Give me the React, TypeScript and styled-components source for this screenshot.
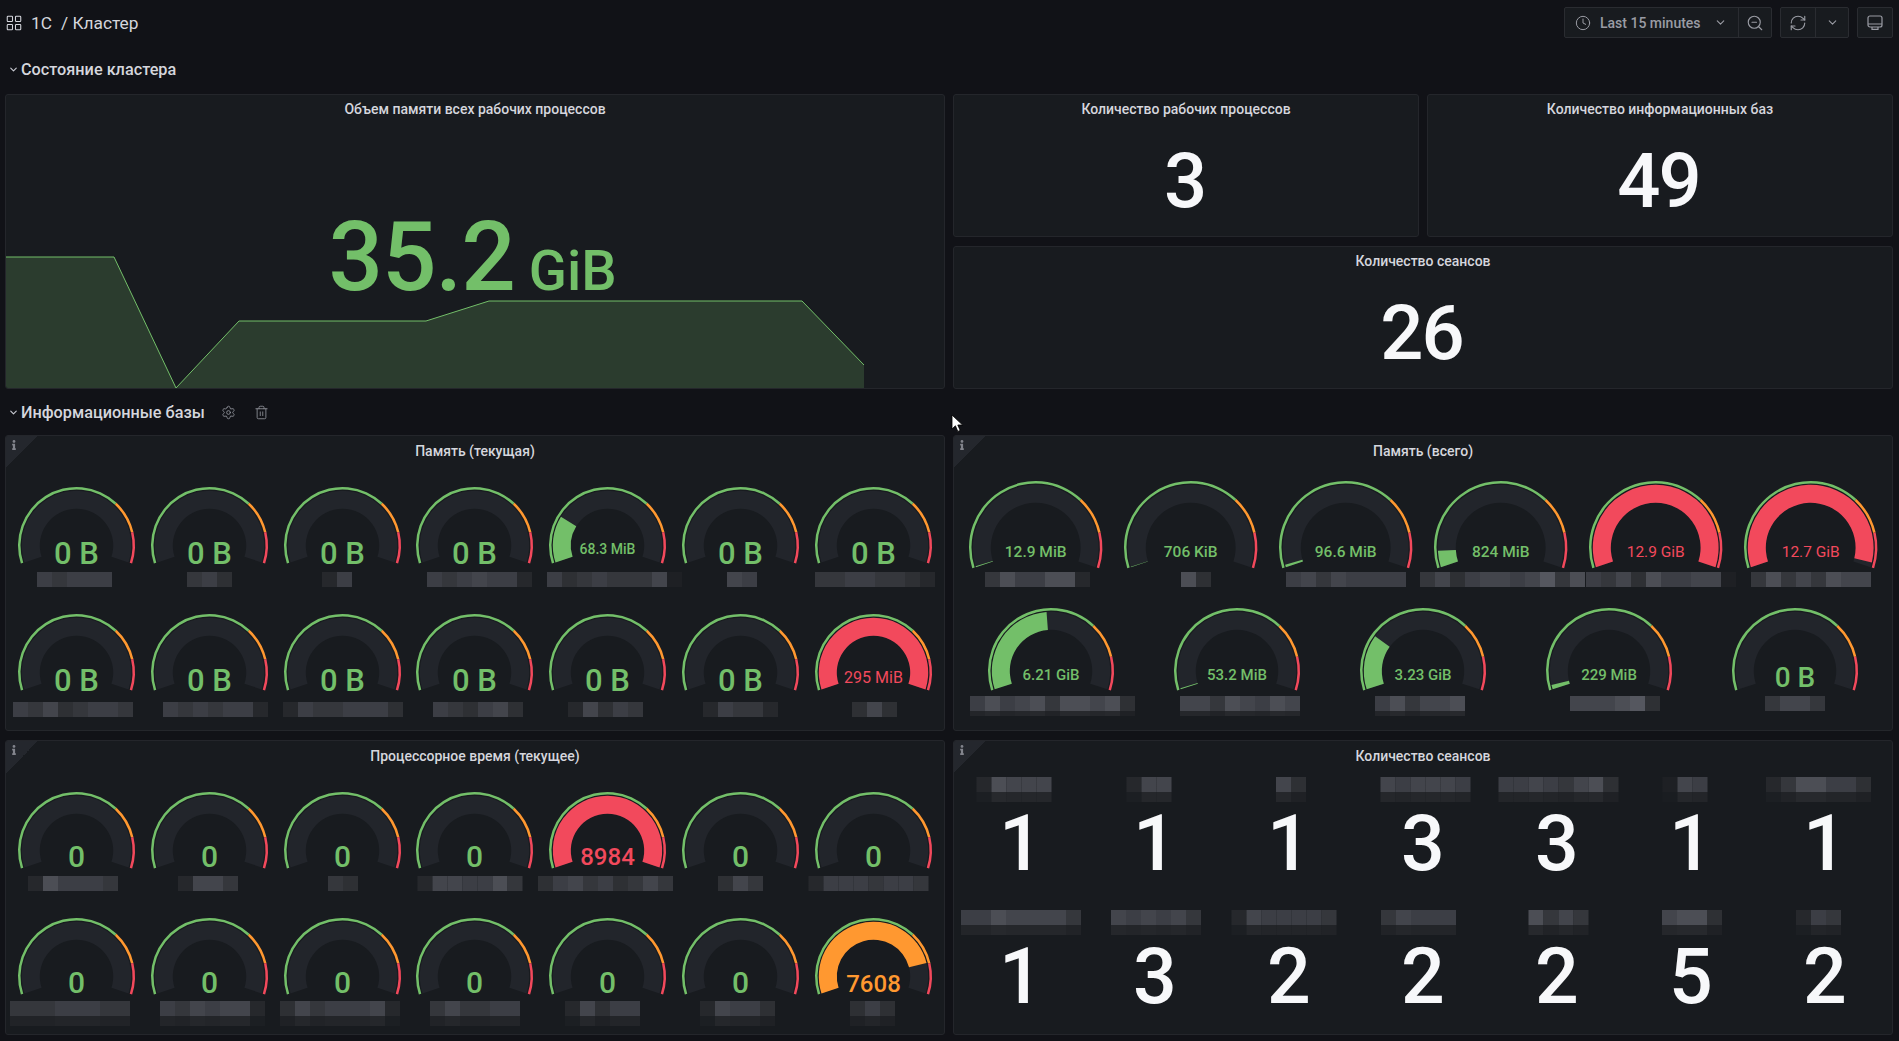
import styled, { createGlobalStyle } from 'styled-components'
import { ChevronDown, Clock, LayoutGrid, RefreshCw, Settings, Trash2, ZoomOut } from 'lucide-react'
import { FaInfo } from 'react-icons/fa'

const GREEN = '#73BF69'
const ORANGE = '#FF9830'
const RED = '#F2495C'

const SHADES = ['#1e2024', '#26282c', '#2e3034', '#35373c', '#3c3e45', '#43454c', '#4c4e55', '#55575f']
const TAILS = ['#1a1d21', '#1c1f23', '#1f2125', '#212327', '#232529', '#25272b', '#27292d', '#292b2f']

type Reading = {
  text: string
  fill: number
  size: number
  base: number
  shift: number
  tiles: string
  color?: string
  thin?: boolean
}

const zeroB = (shift: number, tiles: string): Reading => ({ text: '0 B', fill: 0, size: 31, base: 18, shift, tiles })
const zero = (shift: number, tiles: string): Reading => ({ text: '0', fill: 0, size: 30, base: 16.5, shift, tiles })

const memoryNow: Reading[][] = [
  [
    zeroB(-2, '43444'),
    zeroB(0, '342'),
    zeroB(-5, '14'),
    zeroB(5, '4345441'),
    { text: '68.3 MiB', fill: 0.23, size: 14, base: 8.5, shift: 7, tiles: '423433350' },
    zeroB(1, '54'),
    zeroB(1, '33443321'),
  ],
  [
    zeroB(-3, '43523443'),
    zeroB(6, '4343441'),
    zeroB(1, '14334442'),
    zeroB(3, '432452'),
    zeroB(-2, '15243'),
    zeroB(0, '14331'),
    { text: '295 MiB', fill: 1, size: 16, base: 10, shift: 1, tiles: '252', color: RED, thin: true },
  ],
]

const memoryTotal: Reading[][] = [
  [
    { text: '12.9 MiB', fill: 0.004, size: 15.5, base: 9, shift: 2, tiles: '3644661' },
    { text: '706 KiB', fill: 0.002, size: 15.5, base: 9, shift: 5, tiles: '62' },
    { text: '96.6 MiB', fill: 0.011, size: 15.5, base: 9, shift: 0, tiles: '45354444' },
    { text: '824 MiB', fill: 0.07, size: 15.5, base: 9, shift: 2, tiles: '35245545736' },
    { text: '12.9 GiB', fill: 1, size: 15.5, base: 9, shift: 5, tiles: '4352644550', color: RED, thin: true },
    { text: '12.7 GiB', fill: 0.98, size: 15.5, base: 9, shift: 0, tiles: '36353655', color: RED, thin: true },
  ],
  [
    { text: '6.21 GiB', fill: 0.48, size: 15, base: 8.5, shift: 1, tiles: '46456366562' },
    { text: '53.2 MiB', fill: 0.005, size: 15, base: 8.5, shift: 3, tiles: '55365465' },
    { text: '3.23 GiB', fill: 0.25, size: 15, base: 8.5, shift: -3, tiles: '463556' },
    { text: '229 MiB', fill: 0.02, size: 15, base: 8.5, shift: 6, tiles: '555672' },
    { text: '0 B', fill: 0, size: 28, base: 16, shift: 0, tiles: '3553' },
  ],
]

const cpuNow: Reading[][] = [
  [
    zero(-3, '164443'),
    zero(-1, '1553'),
    zero(1, '32'),
    zero(-4.5, '1554463'),
    { text: '8984', fill: 1, size: 24, base: 14, shift: -2, tiles: '245342353', color: RED },
    zero(0, '253'),
    zero(-5.5, '14443443'),
  ],
  [
    zero(-6, '33344433'),
    zero(3, '4354551'),
    zero(-2, '25344451'),
    zero(0, '353344'),
    zero(-5, '15244'),
    zero(-3, '15442'),
    { text: '7608', fill: 0.85, size: 24, base: 15, shift: -1, tiles: '242', color: ORANGE },
  ],
]

const sessions: { value: string; shift: number; tiles: string }[][] = [
  [
    { value: '1', shift: -7.5, tiles: '16555' },
    { value: '1', shift: -6.5, tiles: '155' },
    { value: '1', shift: 2, tiles: '52' },
    { value: '3', shift: 2.5, tiles: '545554' },
    { value: '3', shift: 1.5, tiles: '44543562' },
    { value: '1', shift: -6.5, tiles: '054' },
    { value: '1', shift: -7, tiles: '1366442' },
  ],
  [
    { value: '1', shift: 0, tiles: '44655553' },
    { value: '3', shift: 1, tiles: '545453' },
    { value: '2', shift: -5.5, tiles: '1544443' },
    { value: '2', shift: -5, tiles: '35444' },
    { value: '2', shift: 1.5, tiles: '6353' },
    { value: '5', shift: 1, tiles: '5662' },
    { value: '2', shift: -7, tiles: '143' },
  ],
]

const point = (cx: number, cy: number, r: number, t: number) => {
  const a = Math.PI * (0.9 + 1.2 * t)
  return `${(cx + r * Math.cos(a)).toFixed(2)} ${(cy + r * Math.sin(a)).toFixed(2)}`
}

// annular sector between two fractions of the dial
const sector = (cx: number, cy: number, inner: number, outer: number, t0: number, t1: number) => {
  const large = (t1 - t0) * 216 > 180 ? 1 : 0
  return [
    `M${point(cx, cy, outer, t0)}`,
    `A${outer} ${outer} 0 ${large} 1 ${point(cx, cy, outer, t1)}`,
    `L${point(cx, cy, inner, t1)}`,
    `A${inner} ${inner} 0 ${large} 0 ${point(cx, cy, inner, t0)}`,
    'Z',
  ].join(' ')
}

function Mosaic({ tiles, tail, shift }: { tiles: string; tail: number; shift: number }) {
  return (
    <MosaicRow $shift={shift}>
      {tiles.split('').map((c, i) => (
        <Tile key={i} $top={SHADES[+c]} $bottom={TAILS[+c]} $tail={tail} />
      ))}
    </MosaicRow>
  )
}

function Gauge({ r, gap, tail, reading }: { r: number; gap: number; tail: number; reading: Reading }) {
  const w = r * 2 + 6
  const h = Math.ceil(r * 1.309 + 3)
  const cx = r + 3
  const cy = r + 1
  const color = reading.color ?? GREEN
  return (
    <GaugeCell>
      <GaugeDial width={w} height={h} viewBox={`0 0 ${w} ${h}`}>
        <path d={sector(cx, cy, r - 21.8, r - 3.8, 0, 1)} fill="#22252B" />
        {reading.fill > 0 && <path d={sector(cx, cy, r - 21.8, r - 3.8, 0, reading.fill)} fill={color} />}
        <path d={sector(cx, cy, r - 2.5, r, 0, 0.7)} fill={GREEN} />
        <path d={sector(cx, cy, r - 2.5, r, 0.7, 0.855)} fill={ORANGE} />
        <path d={sector(cx, cy, r - 2.5, r, 0.855, 1)} fill={RED} />
        <GaugeValue x={cx} y={cy + reading.base} textAnchor="middle" fill={color} $size={reading.size} $thin={reading.thin}>
          {reading.text}
        </GaugeValue>
      </GaugeDial>
      <LabelGap $gap={gap} />
      <Mosaic tiles={reading.tiles} tail={tail} shift={reading.shift} />
    </GaugeCell>
  )
}

function InfoCorner() {
  return (
    <Corner>
      <FaInfo size={10} />
    </Corner>
  )
}

function TvIcon() {
  return (
    <svg width="16" height="16" viewBox="0 0 16 16" fill="none" stroke="currentColor" strokeWidth="1.2">
      <rect x="1" y="1" width="14" height="11" rx="2" />
      <path d="M1 9h14M5 12v2.4h6V12" />
    </svg>
  )
}

export default function App() {
  return (
    <Page>
      <GlobalStyle />

      {/* Toolbar */}
      <TopBar>
        <Breadcrumb>
          <LayoutGrid size={18} strokeWidth={1.4} />
          <span>1C</span>
          <BreadcrumbPage>/ Кластер</BreadcrumbPage>
        </Breadcrumb>
        <Tools>
          <ToolGroup>
            <TimeButton>
              <Clock size={16} strokeWidth={1.5} />
              <span>Last 15 minutes</span>
              <ChevronDown size={13} />
            </TimeButton>
            <IconButton $divided><ZoomOut size={18} strokeWidth={1.5} /></IconButton>
          </ToolGroup>
          <ToolGroup>
            <IconButton><RefreshCw size={18} strokeWidth={1.5} /></IconButton>
            <IconButton $divided><ChevronDown size={13} /></IconButton>
          </ToolGroup>
          <ToolGroup>
            <IconButton><TvIcon /></IconButton>
          </ToolGroup>
        </Tools>
      </TopBar>

      {/* Cluster state */}
      <SectionRow>
        <ChevronDown size={11} strokeWidth={2.5} />
        <SectionTitle>Состояние кластера</SectionTitle>
      </SectionRow>

      <StateGrid>
        <MemoryPanel>
          <Sparkline width="938" height="293" viewBox="0 0 938 293">
            <path d="M0 162H108L170 293L233 226H420L483 206H796L858 270V293H0Z" fill="#2B3C2E" />
            <path d="M0 162H108L170 293L233 226H420L483 206H796L858 270" fill="none" stroke={GREEN} strokeWidth="1" />
          </Sparkline>
          <PanelTitle>Объем памяти всех рабочих процессов</PanelTitle>
          <MemoryValue>
            <span>35.2</span>
            <MemoryUnit>GiB</MemoryUnit>
          </MemoryValue>
        </MemoryPanel>
        <Panel>
          <PanelTitle>Количество рабочих процессов</PanelTitle>
          <BigStat>3</BigStat>
        </Panel>
        <Panel>
          <PanelTitle>Количество информационных баз</PanelTitle>
          <BigStat>49</BigStat>
        </Panel>
        <WidePanel>
          <PanelTitle>Количество сеансов</PanelTitle>
          <BigStat>26</BigStat>
        </WidePanel>
      </StateGrid>

      {/* Databases */}
      <SectionRow $tight>
        <ChevronDown size={11} strokeWidth={2.5} />
        <SectionTitle>Информационные базы</SectionTitle>
        <RowAction $first><Settings size={15} strokeWidth={1.4} /></RowAction>
        <RowAction><Trash2 size={15} strokeWidth={1.4} /></RowAction>
      </SectionRow>

      <BasesGrid>
        <Panel>
          <InfoCorner />
          <BaseTitle>Память (текущая)</BaseTitle>
          <GaugeBody $top={20}>
            <GaugeRow $cols={7} $height={127}>
              {memoryNow[0].map((x, i) => <Gauge key={i} r={58.5} gap={6} tail={0} reading={x} />)}
            </GaugeRow>
            <GaugeRow $cols={7} $height={127}>
              {memoryNow[1].map((x, i) => <Gauge key={i} r={58.5} gap={9} tail={0} reading={x} />)}
            </GaugeRow>
          </GaugeBody>
        </Panel>

        <Panel>
          <InfoCorner />
          <BaseTitle>Память (всего)</BaseTitle>
          <GaugeBody $top={14}>
            <GaugeRow $cols={6} $height={127}>
              {memoryTotal[0].map((x, i) => <Gauge key={i} r={66.7} gap={1} tail={0} reading={x} />)}
            </GaugeRow>
            <GaugeRow $cols={5} $height={127}>
              {memoryTotal[1].map((x, i) => <Gauge key={i} r={63} gap={3} tail={i < 3 ? 5 : 0} reading={x} />)}
            </GaugeRow>
          </GaugeBody>
        </Panel>

        <Panel>
          <InfoCorner />
          <BaseTitle>Процессорное время (текущее)</BaseTitle>
          <GaugeBody $top={20}>
            <GaugeRow $cols={7} $height={126}>
              {cpuNow[0].map((x, i) => <Gauge key={i} r={58.5} gap={5} tail={0} reading={x} />)}
            </GaugeRow>
            <GaugeRow $cols={7} $height={126}>
              {cpuNow[1].map((x, i) => <Gauge key={i} r={58.5} gap={4} tail={10} reading={x} />)}
            </GaugeRow>
          </GaugeBody>
        </Panel>

        <Panel>
          <InfoCorner />
          <BaseTitle>Количество сеансов</BaseTitle>
          <SessionBody>
            {sessions.flat().map((s, i) => (
              <SessionCell key={i}>
                <SessionLabel>
                  <Mosaic tiles={s.tiles} tail={10} shift={s.shift} />
                </SessionLabel>
                <SessionValue>{s.value}</SessionValue>
              </SessionCell>
            ))}
          </SessionBody>
        </Panel>
      </BasesGrid>

      <Cursor width="13" height="19" viewBox="0 0 13 19">
        <path d="M1 1v14l3.4-3.2 2.4 5.6 2.4-1-2.4-5.4h4.8Z" fill="#fff" stroke="#000" strokeWidth="0.8" />
      </Cursor>
    </Page>
  )
}

const GlobalStyle = createGlobalStyle`
  html, body {
    margin: 0;
    height: 100%;
    background: #111217;
    overflow: hidden;
  }

  * {
    box-sizing: border-box;
  }
`

const Page = styled.div`
  position: relative;
  width: 1899px;
  height: 1041px;
  padding: 7px 6px 0 5px;
  font-family: Roboto, 'Noto Sans', sans-serif;
  color: #d8d9da;
`

const TopBar = styled.header`
  display: flex;
  justify-content: space-between;
  align-items: center;
  height: 31px;
`

const Breadcrumb = styled.div`
  display: flex;
  align-items: center;
  gap: 8px;
  font-size: 17.3px;
  color: #d5d6dd;
`

const BreadcrumbPage = styled.span`
  margin-left: 1px;
`

const Tools = styled.div`
  display: flex;
  gap: 8px;
`

const ToolGroup = styled.div`
  display: flex;
  height: 31px;
  background: #181b1f;
  border: 1px solid #2a2c31;
  border-radius: 2px;
  color: #9a9ca4;
`

const TimeButton = styled.div`
  display: flex;
  align-items: center;
  width: 173px;
  padding: 0 11px 0 10px;
  gap: 9px;
  font-size: 14px;
  font-weight: 500;

  span {
    flex: 1;
    white-space: nowrap;
  }
`

const IconButton = styled.div<{ $divided?: boolean }>`
  display: flex;
  align-items: center;
  justify-content: center;
  width: ${p => (p.$divided ? '33px' : '34px')};
  border-left: ${p => (p.$divided ? '1px solid #2a2c31' : '0')};
`

const SectionRow = styled.div<{ $tight?: boolean }>`
  display: flex;
  align-items: center;
  height: 24px;
  margin: ${p => (p.$tight ? '11px 0' : '19px 0 13px')};
  padding-left: 3px;
  color: #c7c9d1;
`

const SectionTitle = styled.h6`
  margin: 0 0 0 2px;
  font-size: 16.25px;
  font-weight: 500;
  color: #d5d6dd;
`

const RowAction = styled.div<{ $first?: boolean }>`
  display: flex;
  margin-left: ${p => (p.$first ? '16px' : '18px')};
  color: #8e9098;
`

const StateGrid = styled.section`
  display: grid;
  grid-template-columns: 940px 466px 466px;
  grid-template-rows: 143px 143px;
  gap: 9px 8px;
`

const BasesGrid = styled.section`
  display: grid;
  grid-template-columns: 940px 940px;
  grid-template-rows: 296px 295px;
  gap: 9px 8px;
`

const Panel = styled.article`
  position: relative;
  overflow: hidden;
  background: #181b1f;
  border: 1px solid #24262b;
  border-radius: 3px;
`

const MemoryPanel = styled(Panel)`
  grid-row: span 2;
`

const WidePanel = styled(Panel)`
  grid-column: span 2;
`

const Corner = styled.div`
  position: absolute;
  top: 0;
  left: 0;
  display: flex;
  width: 32px;
  height: 32px;
  padding: 4px 0 0 3px;
  color: #82848c;
  background: linear-gradient(135deg, #24272d 50%, transparent 50%);
`

const PanelTitle = styled.h2`
  position: relative;
  margin: 0;
  height: 30px;
  line-height: 29px;
  font-size: 14px;
  font-weight: 500;
  text-align: center;
  color: #d5d6dd;
`

const BaseTitle = styled(PanelTitle)`
  line-height: 31px;
`

const BigStat = styled.div`
  margin-top: 18px;
  padding-right: 3px;
  font-size: 76px;
  font-weight: 500;
  line-height: 1;
  letter-spacing: -2px;
  text-align: center;
  color: #f7f8fa;
`

const Sparkline = styled.svg`
  position: absolute;
  left: 0;
  bottom: 0;
`

const MemoryValue = styled.div`
  position: relative;
  display: flex;
  justify-content: center;
  align-items: baseline;
  gap: 14px;
  margin-top: 84px;
  padding-right: 5px;
  font-size: 96px;
  font-weight: 500;
  line-height: 1;
  letter-spacing: -1px;
  color: ${GREEN};
`

const MemoryUnit = styled.span`
  font-size: 56px;
  letter-spacing: 0;
`

const GaugeBody = styled.div<{ $top: number }>`
  padding: ${p => p.$top}px 4px 0;
`

const GaugeRow = styled.div<{ $cols: number; $height: number }>`
  display: grid;
  grid-template-columns: repeat(${p => p.$cols}, 1fr);
  height: ${p => p.$height}px;
`

const GaugeCell = styled.div`
  display: flex;
  flex-direction: column;
  align-items: center;
  min-width: 0;
`

const GaugeDial = styled.svg`
  display: block;
  flex: none;
  overflow: visible;
`

const GaugeValue = styled.text<{ $size: number; $thin?: boolean }>`
  font-family: Roboto, sans-serif;
  font-size: ${p => p.$size}px;
  font-weight: ${p => (p.$thin ? 400 : 500)};
`

const LabelGap = styled.div<{ $gap: number }>`
  flex: none;
  height: ${p => p.$gap}px;
`

const MosaicRow = styled.div<{ $shift: number }>`
  display: flex;
  flex: none;
  width: max-content;
  transform: translateX(${p => p.$shift}px);
`

const Tile = styled.div<{ $top: string; $bottom: string; $tail: number }>`
  flex: 0 0 15px;
  height: ${p => 15 + p.$tail}px;
  background: linear-gradient(${p => p.$top} 0 15px, ${p => p.$bottom} 15px);
`

const SessionBody = styled.div`
  display: grid;
  grid-template-columns: repeat(7, 1fr);
  grid-auto-rows: 132.5px;
  padding-top: 6px;
`

const SessionCell = styled.div`
  display: flex;
  flex-direction: column;
  align-items: center;
  min-width: 0;
`

const SessionLabel = styled.div`
  flex: none;
  height: 29px;
`

const SessionValue = styled.div`
  font-size: 77px;
  font-weight: 500;
  line-height: 1;
  color: #f7f8fa;
`

const Cursor = styled.svg`
  position: absolute;
  left: 951px;
  top: 414px;
`
